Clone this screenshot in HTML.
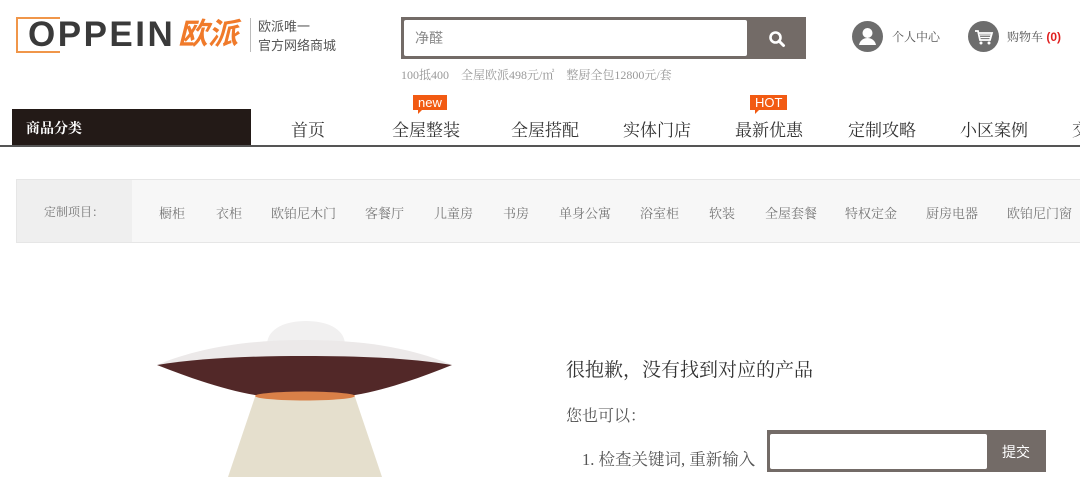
<!DOCTYPE html>
<html><head><meta charset="utf-8"><style>
*{margin:0;padding:0;box-sizing:border-box}
body{width:1080px;height:477px;overflow:hidden;background:#fff;position:relative;font-family:"Liberation Serif","Noto Serif CJK SC",serif;color:#333}
.a{position:absolute;white-space:nowrap}
.sans{font-family:"Liberation Sans","Noto Sans CJK SC",sans-serif}
.nav{font-size:17px;color:#333;top:116px}
.tag{position:absolute;background:#f25a12;color:#fff;font-family:"Liberation Sans",sans-serif;font-size:13px;line-height:15px;padding:0 5px;top:95px}
.tag:after{content:"";position:absolute;left:5px;bottom:-4px;border-left:4px solid #f25a12;border-bottom:4px solid transparent}
.f{font-size:13px;color:#777;top:203px}
</style></head><body>
<div class="a" style="left:16px;top:17px;width:44px;height:36px;border:2px solid #f0964a;border-right:none"></div>
<div class="a sans" style="left:28px;top:14px;font-size:35px;color:#3a3a3a;font-weight:bold;letter-spacing:2.5px;line-height:42px">OPPEIN</div>
<div class="a sans" style="left:178px;top:17px;font-size:30px;color:#f07a2a;font-style:italic;font-weight:bold;line-height:36px">欧派</div>
<div class="a" style="left:250px;top:18px;width:1px;height:34px;background:#bbb"></div>
<div class="a sans" style="left:258px;top:17px;font-size:13px;color:#555;line-height:19px">欧派唯一<br>官方网络商城</div>
<div class="a" style="left:401px;top:17px;width:405px;height:42px;background:#736b67"></div>
<div class="a sans" style="left:404px;top:20px;width:343px;height:36px;background:#fff;border-radius:2px;font-size:14px;color:#888;line-height:36px;padding-left:11px">净醛</div>
<svg class="a" style="left:768px;top:30px" width="18" height="18" viewBox="0 0 18 18"><circle cx="7.5" cy="7.5" r="5" fill="none" stroke="#fff" stroke-width="2.6"/><line x1="11" y1="11" x2="15.5" y2="15.5" stroke="#fff" stroke-width="3" stroke-linecap="round"/></svg>
<div class="a" style="left:401px;top:66px;font-size:12px;color:#999">100抵400 &nbsp;&nbsp; 全屋欧派498元/㎡ &nbsp;&nbsp; 整厨全包12800元/套</div>
<svg class="a" style="left:852px;top:21px" width="31" height="31" viewBox="0 0 31 31"><circle cx="15.5" cy="15.5" r="15.5" fill="#6d6d6d"/><circle cx="15.5" cy="12" r="5" fill="#fff"/><path d="M7 24c1-5 5-7 8.5-7s7.5 2 8.5 7z" fill="#fff"/></svg>
<div class="a" style="left:892px;top:28px;font-size:12px;color:#555">个人中心</div>
<svg class="a" style="left:968px;top:21px" width="31" height="31" viewBox="0 0 31 31"><circle cx="15.5" cy="15.5" r="15.5" fill="#6d6d6d"/><path d="M7 10h3l2 9h10l2-7H11" fill="none" stroke="#fff" stroke-width="1.8"/><path d="M12 14h11M12.5 16.5h10" stroke="#fff" stroke-width="1.2"/><circle cx="13" cy="22" r="1.5" fill="#fff"/><circle cx="21" cy="22" r="1.5" fill="#fff"/></svg>
<div class="a" style="left:1007px;top:28px;font-size:12px;color:#555">购物车<b style="color:#e02020;font-family:'Liberation Sans',sans-serif"> (0)</b></div>
<div class="a" style="left:12px;top:109px;width:239px;height:37px;background:#231a17"></div>
<div class="a" style="left:26px;top:118px;font-size:14px;color:#fff;font-weight:bold">商品分类</div>
<div class="a" style="left:0;top:145px;width:1080px;height:2px;background:#555"></div>
<div class="a nav" style="left:291px">首页</div>
<div class="a nav" style="left:392px">全屋整装</div><span class="tag" style="left:413px">new</span>
<div class="a nav" style="left:511px">全屋搭配</div>
<div class="a nav" style="left:623px">实体门店</div>
<div class="a nav" style="left:735px">最新优惠</div><span class="tag" style="left:750px">HOT</span>
<div class="a nav" style="left:848px">定制攻略</div>
<div class="a nav" style="left:960px">小区案例</div>
<div class="a nav" style="left:1072px">交</div>
<div class="a" style="left:16px;top:179px;width:1070px;height:64px;background:#f7f7f7;border:1px solid #e6e6e6"></div>
<div class="a" style="left:17px;top:180px;width:115px;height:62px;background:#efefef"></div>
<div class="a f" style="left:44px;font-size:12px">定制项目：</div>
<div class="a f" style="left:159px">橱柜</div>
<div class="a f" style="left:216px">衣柜</div>
<div class="a f" style="left:271px">欧铂尼木门</div>
<div class="a f" style="left:365px">客餐厅</div>
<div class="a f" style="left:434px">儿童房</div>
<div class="a f" style="left:503px">书房</div>
<div class="a f" style="left:559px">单身公寓</div>
<div class="a f" style="left:640px">浴室柜</div>
<div class="a f" style="left:709px">软装</div>
<div class="a f" style="left:765px">全屋套餐</div>
<div class="a f" style="left:845px">特权定金</div>
<div class="a f" style="left:926px">厨房电器</div>
<div class="a f" style="left:1007px">欧铂尼门窗</div>
<svg class="a" style="left:0;top:300px" width="560" height="177" viewBox="0 300 560 177">
<path d="M228 477L255 397H355L382 477Z" fill="#e5dfcd"/>
<path d="M267 344C268 328 286 321 306 321S344 328 345 344Z" fill="#f1f0f0"/>
<path d="M157 365C200 347 250 340 305 340S410 347 452 365Z" fill="#ece9e9"/>
<path d="M157 365C200 358 250 356 305 356S410 358 452 365C420 378 385 390 355 395H255C225 390 190 378 157 365Z" fill="#522828"/>
<ellipse cx="305" cy="396" rx="50" ry="4.5" fill="#d98048"/>
</svg>
<div class="a" style="left:566px;top:355px;font-size:19px;color:#333">很抱歉，没有找到对应的产品</div>
<div class="a" style="left:566px;top:403px;font-size:16px;color:#555">您也可以：</div>
<div class="a" style="left:582px;top:446px;font-size:16.5px;color:#555">1. 检查关键词, 重新输入</div>
<div class="a" style="left:767px;top:430px;width:279px;height:42px;background:#736b67"></div>
<div class="a" style="left:770px;top:434px;width:217px;height:35px;background:#fff;border-radius:2px"></div>
<div class="a sans" style="left:1002px;top:442px;font-size:14px;color:#fff">提交</div>
</body></html>
